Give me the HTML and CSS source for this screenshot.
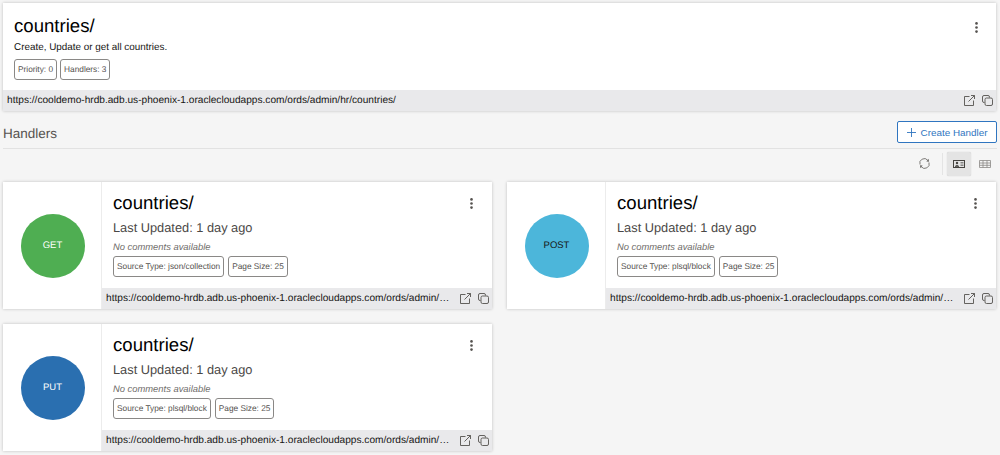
FILE: index.html
```html
<!DOCTYPE html>
<html lang="en">
<head>
    <meta charset="UTF-8">
    <meta name="viewport" content="width=device-width, initial-scale=1.0">
    <title>countries/</title>
    <link rel="stylesheet" href="styles.css">
</head>
<body>
    <svg class="icon-defs" width="0" height="0">
        <symbol id="icon-open" viewBox="0 0 11 11">
            <path d="M5.5 1.500H0.500V10.500H9.500V5.500M4.500 6.500L10.500 0.500M7 0.500H10.500V4" fill="none" stroke="currentColor" stroke-width="0.9"/>
        </symbol>
        <symbol id="icon-copy" viewBox="0 0 11 11">
            <path d="M2.500 7.500H2Q0.500 7.500 0.500 6V2Q0.500 0.500 2 0.500H6Q7.500 0.500 7.500 2V2.500" fill="none" stroke="currentColor" stroke-width="0.9"/>
            <rect x="3" y="3" width="7.500" height="7.500" rx="1.500" fill="none" stroke="currentColor" stroke-width="0.9"/>
        </symbol>
        <symbol id="icon-more" viewBox="0 0 3 11">
            <circle cx="1.500" cy="1.400" r="1.300" fill="currentColor"/>
            <circle cx="1.500" cy="5.500" r="1.300" fill="currentColor"/>
            <circle cx="1.500" cy="9.600" r="1.300" fill="currentColor"/>
        </symbol>
    </svg>

    <section class="module">
        <div class="module-body">
            <div class="module-text">
                <h1 class="title">countries/</h1>
                <p class="desc">Create, Update or get all countries.</p>
                <div class="tags">
                    <span class="tag">Priority: 0</span>
                    <span class="tag">Handlers: 3</span>
                </div>
            </div>
            <svg class="more"><use href="#icon-more"/></svg>
        </div>
        <div class="url-bar">
            <span class="url">https://cooldemo-hrdb.adb.us-phoenix-1.oraclecloudapps.com/ords/admin/hr/countries/</span>
            <svg class="bar-icon"><use href="#icon-open"/></svg>
            <svg class="bar-icon"><use href="#icon-copy"/></svg>
        </div>
    </section>

    <header class="section-head">
        <h2 class="section-title">Handlers</h2>
        <button class="create-btn">
            <svg class="plus" viewBox="0 0 10 10"><path d="M5 0v10M0 5h10" stroke="currentColor" fill="none"/></svg>
            Create Handler
        </button>
    </header>

    <div class="toolbar">
        <svg class="tool-icon" viewBox="0 0 11 11">
            <path d="M1 6.500A4.500 4.500 0 0 1 8.800 2.300M10 4.500A4.500 4.500 0 0 1 2.200 8.700" fill="none" stroke="currentColor" stroke-width="0.9"/>
            <path d="M7.300 3.400L10 3.700L9.700 0.800zM3.700 7.600L1 7.300L1.300 10.200z" fill="currentColor"/>
        </svg>
        <span class="tool-sep"></span>
        <span class="view-btn active">
            <svg class="view-icon" viewBox="0 0 12 8">
                <rect x="0.500" y="0.500" width="11" height="7" fill="none" stroke="currentColor"/>
                <circle cx="4" cy="3" r="1.200" fill="currentColor"/>
                <path d="M2 6.500q2-2.500 4 0zM7.500 2.500h3M7.500 4h3M7.500 5.500h3" fill="currentColor" stroke="currentColor" stroke-width="0.6"/>
            </svg>
        </span>
        <span class="view-btn">
            <svg class="view-icon" viewBox="0 0 12 8">
                <path d="M0.500 0.500h11v7h-11zM0.500 3h11M0.500 5.300h11M4 0.500v7M8 0.500v7" fill="none" stroke="currentColor" stroke-width="0.8"/>
            </svg>
        </span>
    </div>

    <div class="handlers">
        <article class="card">
            <div class="method-pane"><span class="method get">GET</span></div>
            <div class="card-main">
                <div class="card-body">
                    <div class="card-text">
                        <h3 class="title">countries/</h3>
                        <p class="updated">Last Updated: 1 day ago</p>
                        <p class="comment">No comments available</p>
                        <div class="tags">
                            <span class="tag">Source Type: json/collection</span>
                            <span class="tag">Page Size: 25</span>
                        </div>
                    </div>
                    <svg class="more"><use href="#icon-more"/></svg>
                </div>
                <div class="url-bar">
                    <span class="url">https://cooldemo-hrdb.adb.us-phoenix-1.oraclecloudapps.com/ords/admin/hr/countries/</span>
                    <svg class="bar-icon"><use href="#icon-open"/></svg>
                    <svg class="bar-icon"><use href="#icon-copy"/></svg>
                </div>
            </div>
        </article>

        <article class="card">
            <div class="method-pane"><span class="method post">POST</span></div>
            <div class="card-main">
                <div class="card-body">
                    <div class="card-text">
                        <h3 class="title">countries/</h3>
                        <p class="updated">Last Updated: 1 day ago</p>
                        <p class="comment">No comments available</p>
                        <div class="tags">
                            <span class="tag">Source Type: plsql/block</span>
                            <span class="tag">Page Size: 25</span>
                        </div>
                    </div>
                    <svg class="more"><use href="#icon-more"/></svg>
                </div>
                <div class="url-bar">
                    <span class="url">https://cooldemo-hrdb.adb.us-phoenix-1.oraclecloudapps.com/ords/admin/hr/countries/</span>
                    <svg class="bar-icon"><use href="#icon-open"/></svg>
                    <svg class="bar-icon"><use href="#icon-copy"/></svg>
                </div>
            </div>
        </article>

        <article class="card">
            <div class="method-pane"><span class="method put">PUT</span></div>
            <div class="card-main">
                <div class="card-body">
                    <div class="card-text">
                        <h3 class="title">countries/</h3>
                        <p class="updated">Last Updated: 1 day ago</p>
                        <p class="comment">No comments available</p>
                        <div class="tags">
                            <span class="tag">Source Type: plsql/block</span>
                            <span class="tag">Page Size: 25</span>
                        </div>
                    </div>
                    <svg class="more"><use href="#icon-more"/></svg>
                </div>
                <div class="url-bar">
                    <span class="url">https://cooldemo-hrdb.adb.us-phoenix-1.oraclecloudapps.com/ords/admin/hr/countries/</span>
                    <svg class="bar-icon"><use href="#icon-open"/></svg>
                    <svg class="bar-icon"><use href="#icon-copy"/></svg>
                </div>
            </div>
        </article>
    </div>
</body>
</html>
```

FILE: styles.css
```css
html, body {
    height: 455px;
    overflow: hidden;
}
body {
    margin: 0;
    padding: 3px 3px 0;
    box-sizing: border-box;
    background-color: #f5f5f5;
    color: #161513;
    font-family: "Liberation Sans", Arial, sans-serif;
    text-rendering: geometricPrecision;
}
h1, h2, h3, p {
    margin: 0;
    font-weight: normal;
}
.icon-defs {
    position: absolute;
}

/* module card */
.module {
    width: 993px;
    height: 108px;
    display: flex;
    flex-direction: column;
    background-color: #fff;
    box-shadow: 0 0 3px rgba(0, 0, 0, 0.22);
}
.module-body {
    flex: 1;
    display: flex;
    justify-content: space-between;
    padding: 11px 18px 0 11px;
}
.title {
    font-size: 18.6px;
    line-height: 24px;
    color: #000;
}
.desc {
    margin-top: 3px;
    font-size: 9.9px;
    line-height: 14px;
}
.tags {
    display: flex;
    gap: 3px;
    margin-top: 4px;
}
.card .tags {
    gap: 4px;
    margin-top: 3px;
}
.tag {
    height: 21px;
    box-sizing: border-box;
    padding: 0 3px;
    border: 1px solid #8a8886;
    border-radius: 3px;
    font-size: 8.3px;
    line-height: 19px;
    color: #55524f;
    white-space: nowrap;
}
.more {
    flex: none;
    width: 3px;
    height: 11px;
    margin-top: 8px;
    color: #55524f;
}

/* url strip */
.url-bar {
    flex: none;
    height: 21px;
    display: flex;
    align-items: center;
    gap: 7px;
    padding: 0 3px 0 4px;
    background-color: #e9e9eb;
    color: #55524f;
}
.url {
    flex: 1;
    min-width: 0;
    margin-right: 3px;
    overflow: hidden;
    white-space: nowrap;
    text-overflow: ellipsis;
    font-size: 10.15px;
    color: #161513;
}
.bar-icon {
    flex: none;
    width: 11px;
    height: 11px;
}

/* section header */
.section-head {
    width: 994px;
    height: 38px;
    box-sizing: border-box;
    display: flex;
    justify-content: space-between;
    align-items: flex-start;
    padding-top: 10px;
    border-bottom: 1px solid #e2e2e2;
}
.section-title {
    margin-top: 4px;
    font-size: 13.5px;
    line-height: 18px;
    color: #55524f;
}
.create-btn {
    width: 100px;
    height: 22px;
    display: flex;
    align-items: center;
    justify-content: center;
    gap: 5px;
    padding: 0;
    border: 1px solid #2f75c0;
    border-radius: 2px;
    background-color: #fff;
    color: #2f75c0;
    font-family: inherit;
    font-size: 9.9px;
}
.plus {
    width: 9px;
    height: 9px;
}

/* view toolbar */
.toolbar {
    width: 994px;
    height: 33px;
    box-sizing: border-box;
    padding-bottom: 4px;
    display: flex;
    justify-content: flex-end;
    align-items: center;
    color: #8b8987;
}
.tool-icon {
    width: 11px;
    height: 11px;
    margin-right: 12px;
    color: #6f6d6a;
}
.tool-sep {
    width: 1px;
    height: 22px;
    margin-right: 4px;
    background-color: #e4e4e4;
}
.view-btn {
    width: 24px;
    height: 24px;
    display: flex;
    align-items: center;
    justify-content: center;
    margin-left: 2px;
}
.view-btn.active {
    margin-left: 0;
    background-color: #e4e4e4;
    border-radius: 2px;
    box-shadow: 0 0 1px rgba(0, 0, 0, 0.25);
    color: #45433f;
}
.view-icon {
    width: 12px;
    height: 8px;
}

/* handler cards */
.handlers {
    display: grid;
    grid-template-columns: 489px 489px;
    grid-auto-rows: 127px;
    gap: 15px;
}
.card {
    display: flex;
    min-width: 0;
    background-color: #fff;
    box-shadow: 0 0 3px rgba(0, 0, 0, 0.22);
}
.method-pane {
    flex: none;
    width: 97px;
    padding-left: 1px;
    display: flex;
    align-items: center;
    justify-content: center;
    border-right: 1px solid #ececec;
}
.method {
    width: 64px;
    height: 64px;
    border-radius: 50%;
    display: flex;
    align-items: center;
    justify-content: center;
    font-size: 9.5px;
    color: #fff;
}
.method.get {
    background-color: #4fae52;
}
.method.post {
    background-color: #4cb6da;
    color: #161513;
}
.method.put {
    background-color: #2a6fb0;
}
.card-main {
    flex: 1;
    min-width: 0;
    display: flex;
    flex-direction: column;
}
.card-body {
    flex: 1;
    display: flex;
    justify-content: space-between;
    padding: 9px 19px 0 11px;
}
.card-body .more {
    margin-top: 7px;
}
.updated {
    margin-top: 4px;
    font-size: 12.8px;
    line-height: 18px;
    color: #4a4846;
}
.comment {
    margin-top: 3px;
    font-size: 9.4px;
    line-height: 13px;
    font-style: italic;
    color: #6f6d6a;
}
```
